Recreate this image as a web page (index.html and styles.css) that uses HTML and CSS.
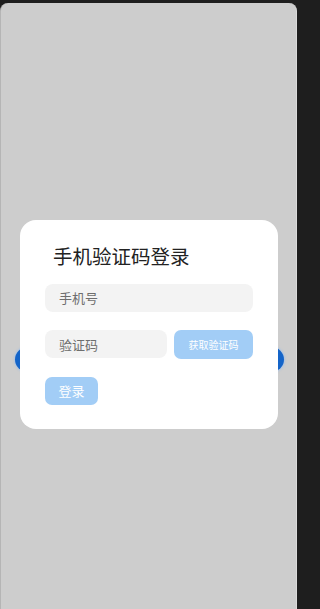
FILE: index.html
```html
<!DOCTYPE html>
<html lang="zh">
<head>
<meta charset="utf-8">
<title>手机验证码登录</title>
<link rel="stylesheet" href="styles.css">
</head>
<body>
<div class="device">
  <div class="stage">
    <div class="pill"></div>
    <div class="card">
      <h1 class="title">手机验证码登录</h1>
      <input class="field field-phone" type="text" placeholder="手机号">
      <div class="code-row">
        <input class="field field-code" type="text" placeholder="验证码">
        <button class="btn btn-code" type="button">获取验证码</button>
      </div>
      <button class="btn btn-login" type="button">登录</button>
    </div>
  </div>
</div>
</body>
</html>
```
FILE: styles.css
```css
html, body {
  margin: 0;
  padding: 0;
  background: #1e1e1e;
  height: 609px;
  overflow: hidden;
  font-family: "Noto Sans CJK SC", "Noto Sans", sans-serif;
}
.device {
  margin: 3px 0 0 0;
  width: 297px;
  height: 606px;
  background: #cdcdcd;
  border-radius: 8px 8px 0 0;
  border-left: 1px solid #b5b5b5;
  border-right: 1px solid #dadada;
  box-sizing: border-box;
  padding-top: 217px;
}
.stage {
  display: grid;
}
.pill {
  grid-area: 1 / 1;
  align-self: start;
  margin: 127px 0 0 14px;
  width: 269px;
  height: 25px;
  border-radius: 13px;
  background: #1464c8;
  box-shadow: 0 0 2px 1px rgba(150, 190, 240, 0.6);
}
.card {
  grid-area: 1 / 1;
  position: relative;
  margin-left: 19px;
  width: 258px;
  height: 209px;
  box-sizing: border-box;
  background: #ffffff;
  border-radius: 16px;
  padding: 22px 25px 24px 25px;
  display: flex;
  flex-direction: column;
}
.title {
  margin: 0 0 14px 8px;
  font-size: 19.5px;
  line-height: 28px;
  font-weight: 400;
  color: #222222;
  letter-spacing: 0;
}
.field {
  display: block;
  height: 28px;
  box-sizing: border-box;
  border: none;
  outline: none;
  background: #f3f3f3;
  border-radius: 8px;
  padding: 0 14px;
  font-family: inherit;
  font-size: 13px;
  color: #333;
  margin: 0;
}
.field::placeholder {
  color: #6e6e6e;
}
.field-phone {
  width: 208px;
}
.code-row {
  display: flex;
  gap: 7px;
  margin-top: 18px;
  align-items: center;
}
.field-code {
  width: 122px;
}
.btn {
  border: none;
  margin: 0;
  padding: 0;
  font-family: inherit;
  color: #ffffff;
  background: #a2cdf6;
  border-radius: 7px;
}
.btn-code {
  width: 79px;
  height: 29px;
  font-size: 10px;
}
.btn-login {
  margin-top: 18px;
  width: 53px;
  height: 29px;
  font-size: 13px;
}
```
